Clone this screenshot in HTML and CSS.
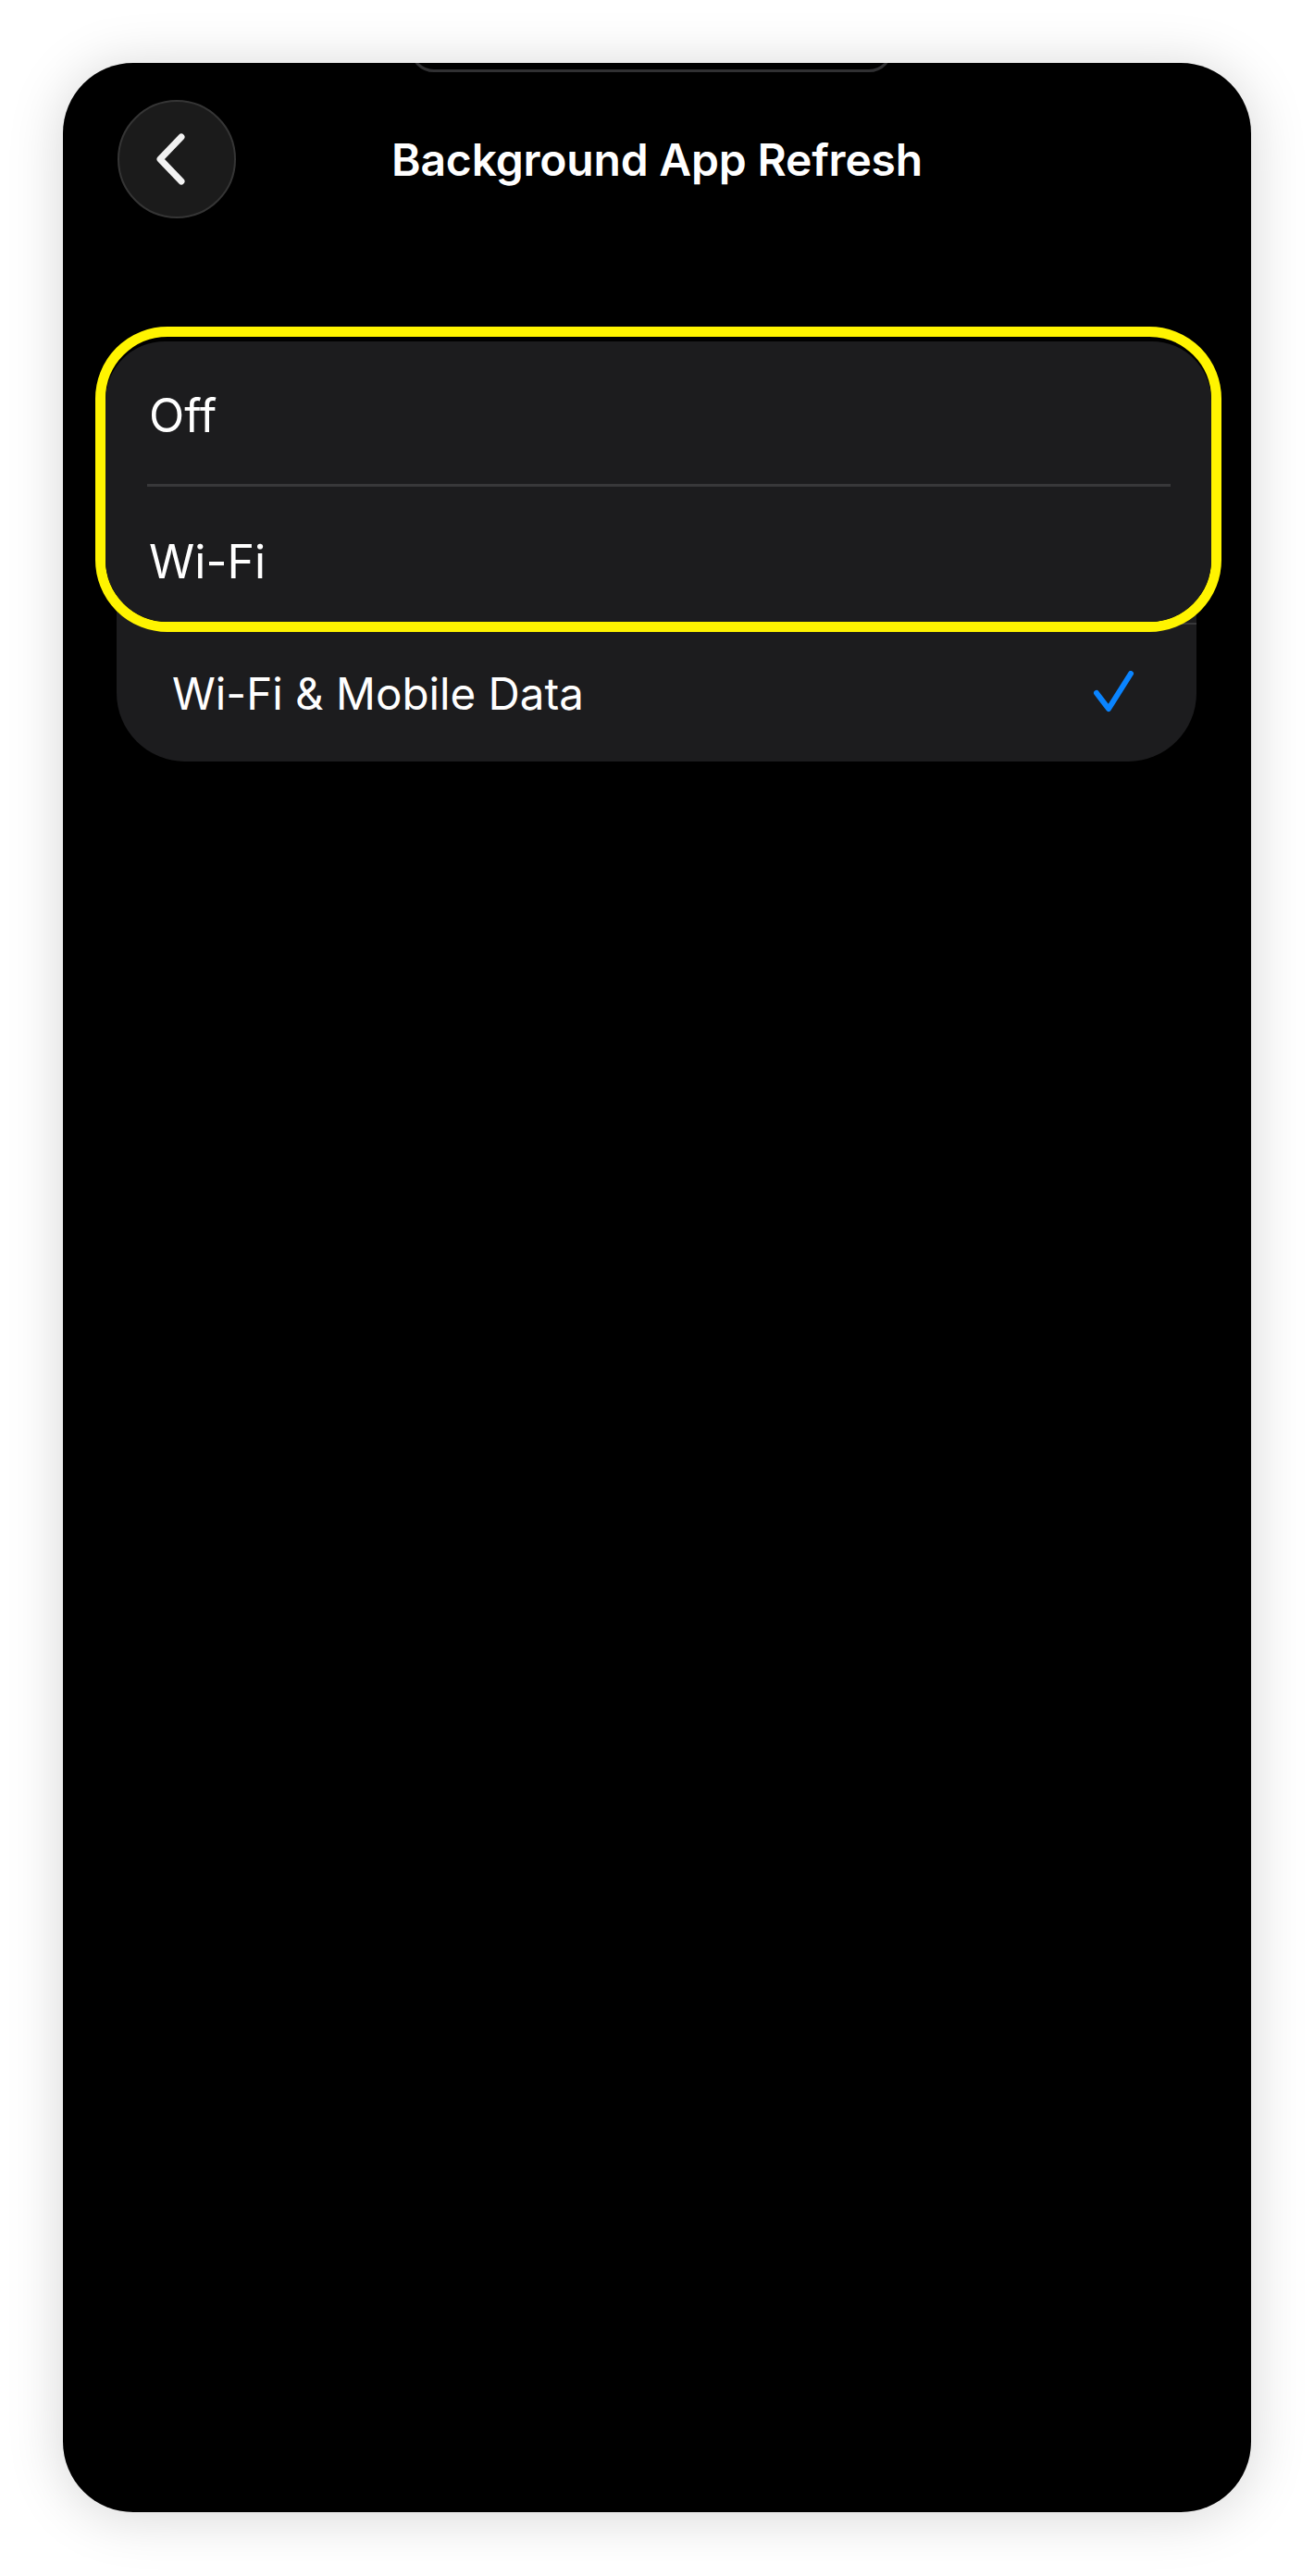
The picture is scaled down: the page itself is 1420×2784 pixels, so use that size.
FILE: index.html
```html
<!DOCTYPE html>
<html lang="en">
<head>
    <meta charset="UTF-8">
    <meta name="viewport" content="width=device-width, initial-scale=1.0">
    <title>Background App Refresh</title>
    <link rel="stylesheet" href="styles.css">
</head>
<body>
    <div class="phone">
        <div class="island"></div>

        <div class="nav-bar">
            <button class="back-btn" aria-label="Back">
                <svg width="40" height="60" viewBox="0 0 40 60">
                    <path d="M30 6 L7 30 L30 54" fill="none" stroke="#f2f2f2" stroke-width="7" stroke-linecap="round" stroke-linejoin="round"/>
                </svg>
            </button>
            <h1 class="nav-title">Background App Refresh</h1>
            <div></div>
        </div>

        <div class="option-list">
            <div class="option-row">Off</div>
            <div class="option-row">Wi-Fi</div>
            <div class="option-row">
                <span>Wi-Fi &amp; Mobile Data</span>
                <svg class="check" width="48" height="48" viewBox="0 0 48 48">
                    <path d="M6 24 L19 41 L43 3" fill="none" stroke="#0a84ff" stroke-width="6" stroke-linecap="round" stroke-linejoin="round"/>
                </svg>
            </div>
        </div>

        <!-- magnified callout over the first two options -->
        <div class="callout">
            <div class="callout-card">
                <div class="callout-row">Off</div>
                <div class="callout-row">Wi-Fi</div>
            </div>
        </div>
    </div>
</body>
</html>
```

FILE: styles.css
```css
body {
    margin: 0;
    background: #fff;
    font-family: Inter, "Noto Sans", sans-serif;
}
.phone {
    position: relative;
    width: 1284px;
    height: 2647px;
    margin: 68px auto;
    background: #000;
    border-radius: 76px;
    overflow: hidden;
    box-shadow: 0 4px 60px rgba(0,0,0,0.17);
    padding-top: 40px;
    box-sizing: border-box;
}
.island {
    position: absolute;
    top: -42px;
    left: 375px;
    width: 522px;
    height: 52px;
    box-sizing: border-box;
    border: 3px solid #303032;
    border-radius: 40px;
}
.nav-bar {
    display: grid;
    grid-template-columns: 128px 1fr 128px;
    align-items: center;
    padding: 0 59px;
}
.back-btn {
    width: 128px;
    height: 128px;
    border-radius: 50%;
    background: #1b1b1b;
    border: 2px solid #353535;
    padding: 0;
    display: flex;
    align-items: center;
    justify-content: center;
    padding-right: 10px;
}
.nav-title {
    margin: 0;
    text-align: center;
    color: #fff;
    font-size: 48px;
    font-weight: 600;
    letter-spacing: -0.2px;
}
.option-list {
    margin: 143px 59px 0 58px;
    background: #1c1c1e;
    border-radius: 74px;
}
.option-row {
    height: 148px;
    display: flex;
    align-items: center;
    justify-content: space-between;
    margin-left: 60px;
    padding-right: 66px;
    color: #fff;
    font-size: 47.5px;
    border-bottom: 2px solid #38383a;
    box-sizing: border-box;
}
.option-row:last-child {
    border-bottom: none;
}
.callout {
    position: absolute;
    left: 35px;
    top: 285px;
    width: 1217px;
    height: 330px;
    box-sizing: border-box;
    border: 11px solid #fff400;
    border-radius: 78px;
    background: #000;
    overflow: hidden;
    padding-top: 5px;
}
.callout-card {
    height: 100%;
    background: #1c1c1e;
    border-radius: 64px 64px 0 0;
}
.callout-row {
    height: 157px;
    display: flex;
    align-items: center;
    margin-left: 45px;
    width: 1106px;
    padding: 5px 0 0 2px;
    box-sizing: border-box;
    color: #fff;
    font-size: 50px;
}
.callout-row:first-child {
    border-bottom: 3px solid #38383a;
}
```
